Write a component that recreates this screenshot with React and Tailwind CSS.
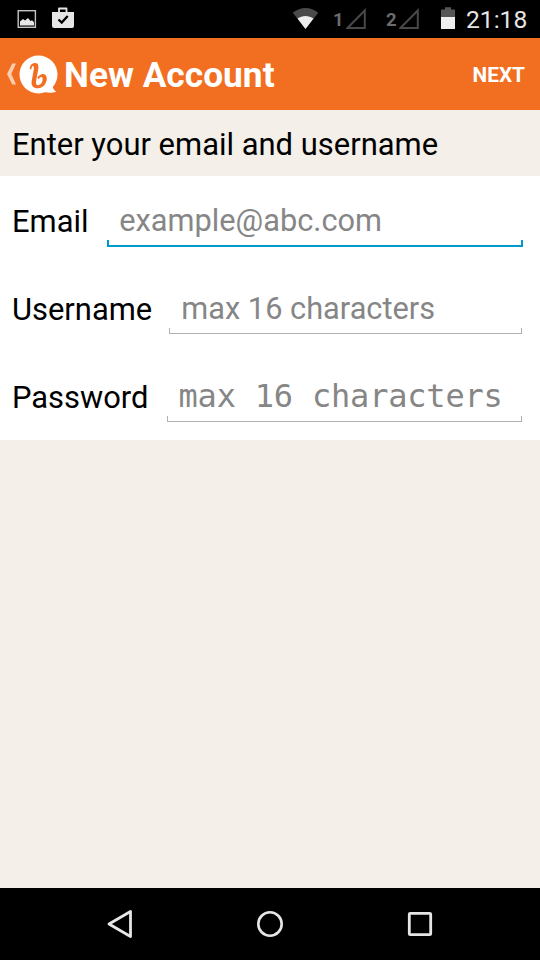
import React, { useState } from 'react'

const fields = [
  { id: 'email', label: 'Email', placeholder: 'example@abc.com', labelWidth: 'w-[95px]' },
  { id: 'username', label: 'Username', placeholder: 'max 16 characters', labelWidth: 'w-[157px]' },
  { id: 'password', label: 'Password', placeholder: 'max 16 characters', labelWidth: 'w-[155px]', mono: true },
]

export default function App() {
  const [active, setActive] = useState('email')
  const [values, setValues] = useState({ email: '', username: '', password: '' })

  return (
    <div className="flex flex-col w-[540px] h-[960px] overflow-hidden bg-[#f4efe9] font-['Roboto',sans-serif] text-black">
      <StatusBar />
      <ActionBar title="New Account" />
      <h2 className="h-[66px] pl-3 pt-[15px] text-[30.95px] leading-10 whitespace-nowrap">Enter your email and username</h2>
      <form className="bg-white">
        {fields.map(f => (
          <Field
            key={f.id}
            field={f}
            active={active === f.id}
            value={values[f.id]}
            onFocus={() => setActive(f.id)}
            onChange={e => setValues({ ...values, [f.id]: e.target.value })}
          />
        ))}
      </form>
      <div className="flex-1" />
      <NavBar />
    </div>
  )
}

function Field({ field, active, value, onFocus, onChange }) {
  return (
    <div className="flex h-[88px] pl-3 pr-[17px]">
      <label htmlFor={field.id} className={`${field.labelWidth} shrink-0 pt-[26px] text-[30.9px] leading-10 whitespace-nowrap`}>{field.label}</label>
      <div className="flex-1 min-w-0 pt-6">
        <input
          id={field.id}
          value={value}
          onFocus={onFocus}
          onChange={onChange}
          placeholder={field.placeholder}
          className={`block w-full h-10 bg-transparent outline-none placeholder:text-[#868686] ${field.mono ? "pl-[11.5px] font-['DejaVu_Sans_Mono',monospace] text-[32px] tracking-[-0.2px]" : 'pl-[12.3px] pt-0.5 text-[30.75px]'}`}
        />
        {active
          ? <div className="h-[7px] border-x-2 border-b-2 border-[#0099cc]" />
          : <div className="h-[6px] mr-px border-x border-b border-[#b0b0b0]" />}
      </div>
    </div>
  )
}

function StatusBar() {
  return (
    <div className="flex items-center shrink-0 h-[38px] bg-black">
      <svg className="ml-4" width="22" height="38" viewBox="0 0 22 38">
        <rect x="2.2" y="10.7" width="17.2" height="16.6" fill="none" stroke="#c4c4c4" strokeWidth="1.4" />
        <path d="M4 25.5v-4l3-2.5 2 1.5 3-2.5 2.5 3 1.5-.7 2 2v3.2z" fill="#e6e6e6" />
      </svg>
      <svg className="ml-[13px]" width="24" height="38" viewBox="0 0 24 38">
        <path d="M8 12V8.500h7.500V12" fill="none" stroke="#e6e6e6" strokeWidth="1.800" strokeLinejoin="round" />
        <path d="M1 12h22v14a2 2 0 0 1-2 2H3a2 2 0 0 1-2-2z" fill="#e6e6e6" />
        <path d="M7.500 19.500l3.200 3 6-6.500" fill="none" stroke="#000" strokeWidth="2.300" />
      </svg>
      <div className="flex-1" />
      <svg width="28" height="38" viewBox="0 0 28 38">
        <path d="M.8 12.800C8 6.500 19 6.500 26.200 12.800L13.500 29z" fill="#4a4a4a" />
        <path d="M5.500 18.500c4.700-3.500 11.300-3.500 16 0L13.500 29z" fill="#eee" />
      </svg>
      <Signal number="1" className="ml-[13px]" />
      <Signal number="2" className="ml-[19px]" />
      <svg className="ml-5" width="16" height="38" viewBox="0 0 16 38">
        <path d="M1 17V9.500h4V7.300h6v2.200h4V17z" fill="#555" />
        <path d="M1 17h14v12H1z" fill="#eee" />
      </svg>
      <span className="w-[84px] pl-2.5 pt-0.5 text-[24.6px] leading-9 text-[#e6e6e6]">21:18</span>
    </div>
  )
}

function Signal({ number, className }) {
  return (
    <div className={`flex items-center w-[34px] justify-between ${className}`}>
      <span className="pt-0.5 text-[18.5px] leading-9 font-bold text-[#6c6c6c]">{number}</span>
      <svg width="21" height="38" viewBox="0 0 21 38">
        <path d="M1.500 28H18.800V10.500z" fill="none" stroke="#484848" strokeWidth="2" />
      </svg>
    </div>
  )
}

function ActionBar({ title }) {
  return (
    <header className="flex items-center shrink-0 h-[72px] pr-[15px] bg-[#f26e20] text-white">
      <svg width="64" height="72" viewBox="0 0 64 72">
        <path d="M12.300 25.500H16L11.300 36 16 46.500H12.300L7 36z" fill="#fbcdb0" />
        <circle cx="38.500" cy="36.500" r="19" fill="#fff" />
        <path d="M44 54c4.500 1 8 1 12.500-.2-3-1.600-4-4-4-7z" fill="#fff" />
        <path transform="translate(-1.500 0) scale(1.060 1)" d="M29.500 31c0-4 2.500-6 5-6 3.200 0 3.500 3 3 6l-2 12c-.4 2.800.3 4.300 1.800 4.300 3 0 4.700-4.300 4.200-7.300-.4-1.600-2-1.300-3.800 1.200l-1-1.700c2.800-4.500 7.500-4.700 8.600-.8 1.200 5-2.500 11.600-8.300 11.600-4 0-6.300-2.600-5.700-7l2-12c.3-2 .2-3.300-.9-3.300-.9 0-1.300 1.400-1.200 3.200z" fill="#f26e20" />
      </svg>
      <h1 className="flex-1 pt-0.5 text-[35.3px] leading-[68px] font-bold">{title}</h1>
      <button className="pt-1 text-[20.8px] font-bold">NEXT</button>
    </header>
  )
}

function NavBar() {
  return (
    <nav className="flex items-center justify-center gap-[118px] shrink-0 h-[72px] bg-black">
      <svg width="32" height="32" viewBox="0 0 32 32">
        <path d="M5 16L26.500 3.500v25z" fill="none" stroke="#e6e6e6" strokeWidth="2.800" strokeLinejoin="round" />
      </svg>
      <svg width="32" height="32" viewBox="0 0 32 32">
        <circle cx="16" cy="16" r="11.700" fill="none" stroke="#e6e6e6" strokeWidth="2.600" />
      </svg>
      <svg width="32" height="32" viewBox="0 0 32 32">
        <rect x="5.300" y="5.300" width="21.400" height="21.400" rx="1" fill="none" stroke="#e6e6e6" strokeWidth="2.800" />
      </svg>
    </nav>
  )
}
